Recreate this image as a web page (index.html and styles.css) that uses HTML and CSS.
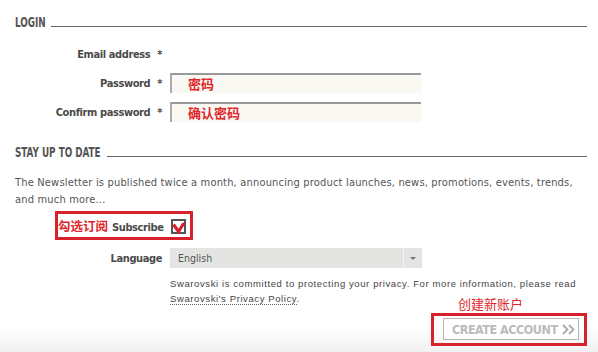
FILE: index.html
```html
<!DOCTYPE html>
<html lang="en">
<head>
    <meta charset="UTF-8">
    <meta name="viewport" content="width=device-width, initial-scale=1.0">
    <title>Create account</title>
    <link rel="stylesheet" href="styles.css">
</head>
<body>
    <div class="page">
        <h2 class="section-title login"><span>LOGIN</span></h2>

        <div class="form-row first">
            <label class="field-label">Email address<em>*</em></label>
            <div class="text-input blank"></div>
        </div>
        <div class="form-row">
            <label class="field-label">Password<em>*</em></label>
            <div class="text-input"><span class="note">密码</span></div>
        </div>
        <div class="form-row">
            <label class="field-label">Confirm password<em>*</em></label>
            <div class="text-input"><span class="note">确认密码</span></div>
        </div>

        <h2 class="section-title news"><span>STAY UP TO DATE</span></h2>

        <p class="intro">The Newsletter is published twice a month, announcing product launches, news, promotions, events, trends, and much more...</p>

        <div class="subscribe-row">
            <div class="mark-box">
                <span class="note">勾选订阅</span>
                <label class="field-label">Subscribe</label>
                <span class="checkbox">
                    <svg width="15" height="15" viewBox="0 0 15 15">
                        <rect x="1" y="1" width="13" height="13" fill="#fff" stroke="#555" stroke-width="2"/>
                        <path d="M2.5 5.5 L7.5 12.5 L13 4" fill="none" stroke="#d4202a" stroke-width="3.2"/>
                    </svg>
                </span>
            </div>
        </div>

        <div class="form-row lang">
            <label class="field-label">Language</label>
            <div class="select">
                <span>English</span>
                <span class="arrow"></span>
            </div>
        </div>

        <p class="privacy">Swarovski is committed to protecting your privacy. For more information, please read <a href="#">Swarovski's Privacy Policy</a>.</p>

        <div class="actions">
            <div class="mark-box wide">
                <span class="note over">创建新账户</span>
                <button type="button" class="create">
                    <span>CREATE ACCOUNT</span>
                    <svg width="13" height="11" viewBox="0 0 13 11">
                        <path d="M1 1 L5.5 5.5 L1 10 M7 1 L11.5 5.5 L7 10" fill="none" stroke="#aaa" stroke-width="1.8"/>
                    </svg>
                </button>
            </div>
        </div>
    </div>
</body>
</html>
```

FILE: styles.css
```css
body {
    margin: 0;
    background: linear-gradient(to bottom, #ffffff 0, #ffffff 325px, #f1f1f1 352px);
    min-height: 352px;
    font-family: "DejaVu Sans Condensed", "DejaVu Sans", sans-serif;
    color: #4a4a4a;
}

.page {
    padding: 15px 11px 0 15px;
}

/* headings with the rule running to the right */
.section-title {
    display: flex;
    align-items: flex-end;
    margin: 0;
    height: 14px;
    font-size: 14px;
    line-height: 14px;
    font-weight: bold;
    color: #555;
    white-space: nowrap;
}

.section-title span {
    display: inline-block;
    transform: scaleX(0.7);
    transform-origin: 0 50%;
}

.section-title::after {
    content: "";
    flex: 1;
    border-bottom: 1px solid #666;
    margin-bottom: 2px;
}

.section-title.login::after {
    margin-left: -8px;
}

.section-title.news {
    margin-top: 23px;
}

.section-title.news::after {
    margin-left: -30px;
}

.form-row {
    display: flex;
    align-items: center;
    height: 20px;
    margin-top: 9px;
}

.form-row.first {
    margin-top: 15px;
}

.field-label {
    width: 147px;
    flex: none;
    text-align: right;
    font-size: 11px;
    font-weight: bold;
    letter-spacing: -0.4px;
    color: #4a4a4a;
}

.field-label em {
    font-style: normal;
    margin-left: 7px;
}

.text-input {
    margin-left: 8px;
    width: 249px;
    height: 18px;
    border-top: 2px solid #999;
    border-left: 2px solid #aaa;
    background-color: #faf8f3;
    display: flex;
    align-items: center;
}

.text-input.blank {
    border-color: transparent;
    background: none;
}

.note {
    font-family: "Noto Sans CJK SC", sans-serif;
    font-size: 13px;
    font-weight: bold;
    color: #e0262a;
    line-height: 14px;
}

.text-input .note {
    margin-left: 16px;
}

.intro {
    margin: 15px 0 0 0;
    font-size: 11px;
    line-height: 17px;
    letter-spacing: 0.18px;
    color: #555;
}

.subscribe-row {
    margin-top: 3px;
    padding-left: 40px;
}

.mark-box {
    display: inline-flex;
    align-items: center;
    border: 3px solid #d7212b;
    position: relative;
}

.subscribe-row .mark-box {
    height: 23px;
    padding: 0 4px 0 0;
}

.subscribe-row .note {
    font-size: 12.5px;
    margin-top: 1px;
}

.subscribe-row .field-label {
    width: auto;
    margin-left: 4px;
    margin-top: 4px;
}

.checkbox {
    display: flex;
    margin-left: 7px;
    margin-top: 2px;
}

.form-row.lang {
    margin-top: 8px;
}

.select {
    margin-left: 8px;
    width: 252px;
    height: 20px;
    background-color: #e4e5e2;
    display: flex;
    align-items: center;
    font-size: 10.5px;
    color: #555;
}

.select span:first-child {
    flex: 1;
    padding-left: 8px;
}

.arrow {
    width: 18px;
    height: 20px;
    border-left: 1px solid #f5f5f5;
    position: relative;
}

.arrow::after {
    content: "";
    position: absolute;
    left: 6px;
    top: 9px;
    border-left: 3px solid transparent;
    border-right: 3px solid transparent;
    border-top: 3px solid #777;
}

.privacy {
    margin: 8px 0 0 155px;
    font-family: "Liberation Sans", Arial, sans-serif;
    font-size: 9.5px;
    line-height: 15px;
    letter-spacing: 0.6px;
    color: #444;
}

.privacy a {
    color: #444;
    text-decoration: none;
    border-bottom: 1px dotted #666;
}

.actions {
    display: flex;
    justify-content: flex-end;
    margin-top: 7px;
}

.mark-box.wide {
    padding: 2px 5px 3px 9px;
}

.note.over {
    position: absolute;
    left: 24px;
    top: -19px;
    font-weight: normal;
    font-size: 13px;
}

/* faded create account button */
.create {
    width: 136px;
    height: 22px;
    border: 1px solid #b5b5b5;
    background: #fff;
    font-family: "DejaVu Sans Condensed", sans-serif;
    font-size: 12.5px;
    font-weight: bold;
    letter-spacing: -0.5px;
    white-space: nowrap;
    color: #bbbbbb;
    padding: 0 3px 0 8px;
    display: flex;
    align-items: center;
    justify-content: space-between;
    cursor: pointer;
}
```
